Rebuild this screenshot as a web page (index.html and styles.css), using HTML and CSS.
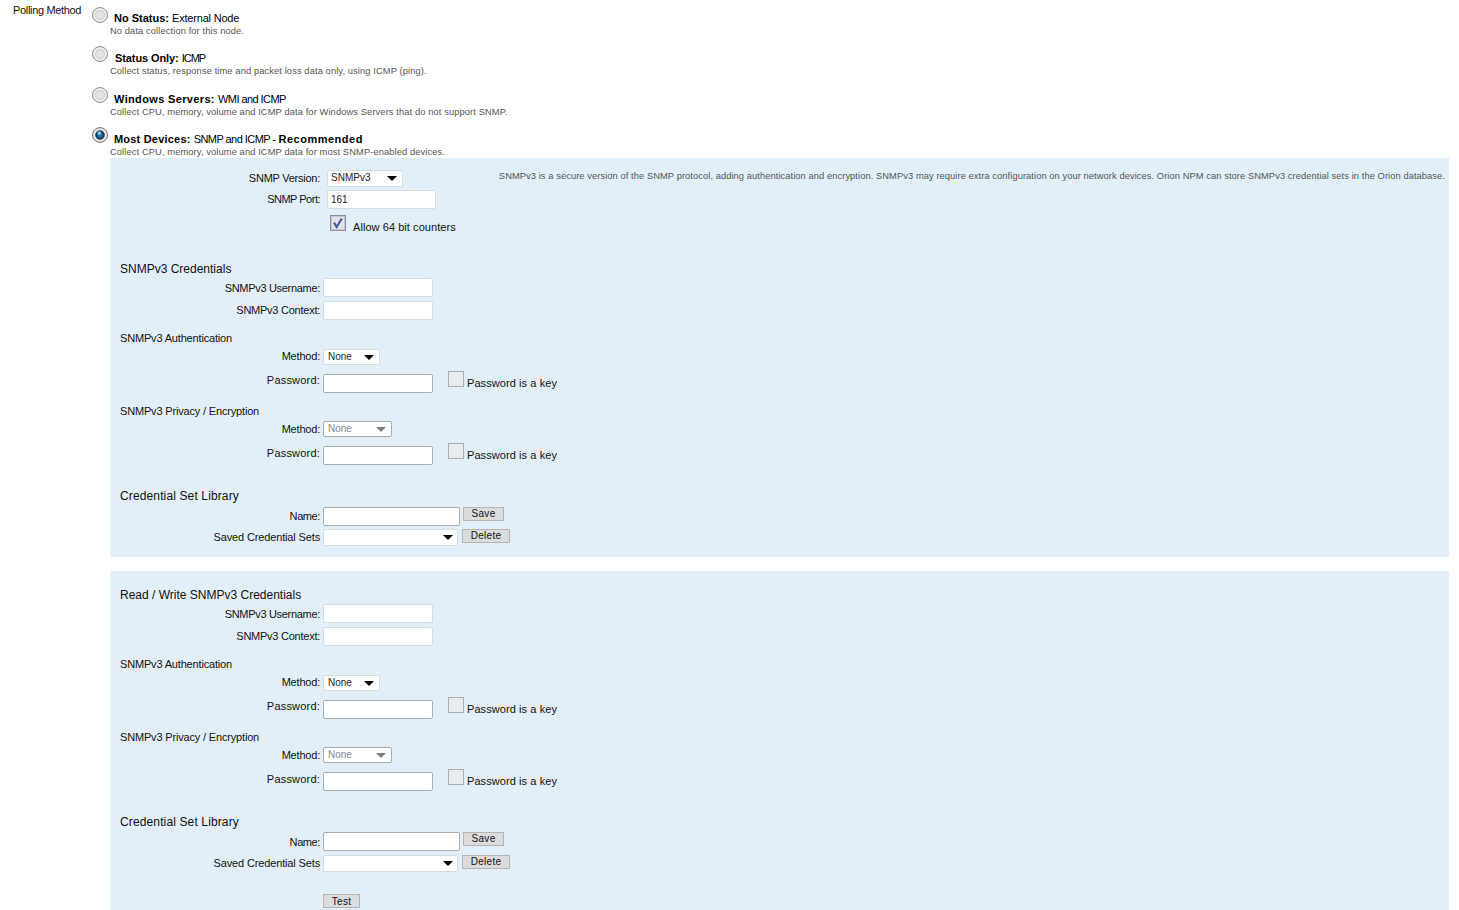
FILE: index.html
```html
<!DOCTYPE html>
<html lang="en">
<head>
<meta charset="utf-8">
<title>Polling Method</title>
<link rel="stylesheet" href="styles.css">
</head>
<body>
<main class="page">
  <div class="page-label">Polling Method</div>
  <div class="methods">
    <div class="option opt-a">
      <div class="option-head"><span class="radio"></span><span class="option-title"><b>No Status:</b> <span class="n-ext">External Node</span></span></div>
      <div class="option-desc">No data collection for this node.</div>
    </div>
    <div class="option opt-b">
      <div class="option-head"><span class="radio"></span><span class="option-title shift"><b class="b-tight">Status Only:</b> <span class="n-icmp">ICMP</span></span></div>
      <div class="option-desc">Collect status, response time and packet loss data only, using ICMP (ping).</div>
    </div>
    <div class="option opt-c">
      <div class="option-head"><span class="radio"></span><span class="option-title"><b class="b-wide">Windows Servers:</b> <span class="n-caps">WMI and ICMP</span></span></div>
      <div class="option-desc">Collect CPU, memory, volume and ICMP data for Windows Servers that do not support SNMP.</div>
    </div>
    <div class="option opt-d">
      <div class="option-head"><span class="radio on"></span><span class="option-title"><b class="b-mid">Most Devices:</b> <span class="n-caps">SNMP and ICMP -</span> <b class="b-rec">Recommended</b></span></div>
      <div class="option-desc">Collect CPU, memory, volume and ICMP data for most SNMP-enabled devices.</div>
    </div>

    <section class="panel panel-first">
      <div class="top">
        <div class="top-form">
          <div class="row r-version"><span class="lbl">SNMP Version:</span><span class="select s-version">SNMPv3</span></div>
          <div class="row r-port"><span class="lbl">SNMP Port:</span><span class="input i-port">161</span></div>
          <div class="row r-allow"><span class="lbl"></span>
            <svg class="tick" width="16" height="16" viewBox="0 0 16 16"><rect x=".5" y=".5" width="15" height="15" fill="#e4e4e8" stroke="#8c8f94"/><rect x="1.5" y="1.5" width="13" height="13" fill="#dfe3ea" stroke="#c4c7cd"/><path d="M4 7.5 L6.6 12 L11.8 3.6" fill="none" stroke="#44579e" stroke-width="2"/></svg>
            <span class="allow-text">Allow 64 bit counters</span>
          </div>
        </div>
        <p class="note">SNMPv3 is a secure version of the SNMP protocol, adding authentication and encryption. SNMPv3 may require extra configuration on your network devices. Orion NPM can store SNMPv3 credential sets in the Orion database.</p>
      </div>

      <div class="cred">
        <h3 class="big-title">SNMPv3 Credentials</h3>
        <div class="row r-user"><span class="lbl">SNMPv3 Username:</span><span class="input i-med"></span></div>
        <div class="row r-ctx"><span class="lbl">SNMPv3 Context:</span><span class="input i-med"></span></div>
        <h4 class="sub-title st-auth">SNMPv3 Authentication</h4>
        <div class="row r-method"><span class="lbl">Method:</span><span class="select s-none">None</span></div>
        <div class="row r-pass1"><span class="lbl">Password:</span><span class="input i-med i-dark"></span><span class="box"></span><span class="key">Password is a key</span></div>
        <h4 class="sub-title st-priv">SNMPv3 Privacy / Encryption</h4>
        <div class="row r-method2"><span class="lbl">Method:</span><span class="select s-off">None</span></div>
        <div class="row r-pass2"><span class="lbl">Password:</span><span class="input i-med i-dark"></span><span class="box"></span><span class="key">Password is a key</span></div>
        <h3 class="big-title st-lib">Credential Set Library</h3>
        <div class="row r-name"><span class="lbl">Name:</span><span class="input i-long i-dark"></span><button class="btn b-save" type="button">Save</button></div>
        <div class="row r-saved"><span class="lbl">Saved Credential Sets</span><span class="select s-saved"></span><button class="btn b-del" type="button">Delete</button></div>
      </div>
    </section>

    <section class="panel panel-second">
      <div class="cred">
        <h3 class="big-title">Read / Write SNMPv3 Credentials</h3>
        <div class="row r-user"><span class="lbl">SNMPv3 Username:</span><span class="input i-med"></span></div>
        <div class="row r-ctx"><span class="lbl">SNMPv3 Context:</span><span class="input i-med"></span></div>
        <h4 class="sub-title st-auth">SNMPv3 Authentication</h4>
        <div class="row r-method"><span class="lbl">Method:</span><span class="select s-none">None</span></div>
        <div class="row r-pass1"><span class="lbl">Password:</span><span class="input i-med i-dark"></span><span class="box"></span><span class="key">Password is a key</span></div>
        <h4 class="sub-title st-priv">SNMPv3 Privacy / Encryption</h4>
        <div class="row r-method2"><span class="lbl">Method:</span><span class="select s-off">None</span></div>
        <div class="row r-pass2"><span class="lbl">Password:</span><span class="input i-med i-dark"></span><span class="box"></span><span class="key">Password is a key</span></div>
        <h3 class="big-title st-lib">Credential Set Library</h3>
        <div class="row r-name"><span class="lbl">Name:</span><span class="input i-long i-dark"></span><button class="btn b-save" type="button">Save</button></div>
        <div class="row r-saved"><span class="lbl">Saved Credential Sets</span><span class="select s-saved"></span><button class="btn b-del" type="button">Delete</button></div>
        <div class="row r-test"><span class="lbl"></span><button class="btn b-test" type="button">Test</button></div>
      </div>
    </section>
  </div>
</main>
</body>
</html>
```
FILE: styles.css
```css
* { box-sizing: border-box; }
html, body { margin: 0; height: 910px; overflow: hidden; background: #fff; }
body { font-family: "Liberation Sans", Arial, sans-serif; font-size: 11px; color: #111; }

.page { display: flex; align-items: flex-start; padding-right: 10px; }
.page-label { flex: none; width: 92px; padding: 3px 0 0 13px; line-height: 14px; font-size: 11px; letter-spacing: -.33px; white-space: nowrap; }
.methods { flex: 1; min-width: 0; padding-top: 7px; }

.option { display: flex; flex-direction: column; }
.opt-a { height: 39px; }
.opt-b { height: 41px; }
.opt-c { height: 40px; }
.opt-d { height: 31px; }
.option-head { display: flex; align-items: flex-start; height: 16px; }
.option-title { margin: 5px 0 0 6px; line-height: 14px; font-size: 11px; color: #000; white-space: nowrap; }
.opt-a .option-title { margin-top: 4px; }
.option-title.shift { margin-left: 7px; }
.n-ext { letter-spacing: -.2px; }
.n-caps { letter-spacing: -.55px; }
.n-icmp { letter-spacing: -1px; }
.b-tight { letter-spacing: -.1px; }
.b-wide { letter-spacing: .35px; }
.b-mid { letter-spacing: .2px; }
.b-rec { letter-spacing: .5px; }
.option-desc { margin: 3px 0 0 18px; line-height: 13px; font-size: 9.33px; letter-spacing: .1px; color: #555; white-space: nowrap; }
.opt-a .option-desc { margin-top: 2px; }

.radio { flex: none; width: 16px; height: 16px; border-radius: 50%; border: 1px solid #8f9296;
  background: radial-gradient(circle closest-side at 50% 50%, #e4e4e4 0 45%, #d0d0d0 68%, #f8f8f8 82%, #dcdcdc 100%); }
.radio.on { border-color: #7c7f83;
  background: radial-gradient(circle 2.5px at 45% 36%, #d6f3fd 0, rgba(214, 243, 253, 0) 100%),
    radial-gradient(circle closest-side at 50% 50%, #1f8fc6 0, #0d5d8f 40%, #10344f 56%, #5b5f64 64%, #f4f4f4 74%, #cfcfcf 100%); }

.panel { background: #e3eff8; margin-left: 18px; }
.panel-first { height: 399px; padding: 12px 4px 0 10px; }
.panel-second { height: 339px; padding: 15px 4px 0 10px; margin-top: 14px; }

.top { display: flex; justify-content: space-between; height: 90px; }
.top-form { width: 340px; flex: none; }
.note { margin: 0; line-height: 12px; font-size: 9.33px; letter-spacing: .07px; color: #555; white-space: nowrap; }

.row { display: flex; align-items: flex-start; }
.lbl { width: 200px; flex: none; text-align: right; font-size: 11px; letter-spacing: -.25px; line-height: 14px; color: #111; white-space: nowrap; }

.input { flex: none; display: block; height: 19px; background: #fff; border: 1px solid #d3dde4; border-radius: 2px;
  font-size: 10px; line-height: 17px; padding-left: 3px; color: #222; margin-left: 3px; }
.i-dark { border-color: #a9adb0; }
.i-med { width: 110px; }
.i-long { width: 137px; }
.i-port { width: 109px; margin-left: 7px; }

.select { flex: none; display: block; position: relative; margin-left: 3px; background: #fff; border: 1px solid #d3dde4; border-radius: 2px;
  font-size: 10px; line-height: 14px; padding-left: 4px; color: #222; }
.select::after { content: ""; position: absolute; top: 5px; right: 5px; border-style: solid; border-width: 5px 5px 0; border-color: #000 transparent transparent; }
.s-version { width: 76px; height: 17px; margin-left: 7px; line-height: 13px; padding-left: 3px; }
.s-none { width: 57px; height: 16px; }
.s-saved { width: 135px; height: 17px; }
.s-saved::after { right: 4px; }
.s-off { width: 69px; height: 16px; color: #7d8a93; border-color: #a9adb0; }
.s-off::after { border-top-color: #7f7f7f; }

.box { flex: none; width: 16px; height: 16px; margin-left: 15px; background: #e7ecef; border: 1px solid #a9adb0; }
.key { margin: 5px 0 0 3px; line-height: 14px; font-size: 11px; letter-spacing: .08px; color: #111; white-space: nowrap; }

.btn { flex: none; margin: 0; padding: 0; height: 14px; background: #dcdcdc; border: 1px solid #b4b4b4; border-radius: 0;
  font-family: inherit; font-size: 10px; line-height: 10px; color: #111; letter-spacing: .3px; }
.b-save { width: 41px; margin-left: 3px; }
.b-del { width: 48px; margin-left: 4px; }
.b-test { width: 37px; margin-left: 3px; padding-top: 1px; }

.big-title, .sub-title { margin: 0; font-weight: 400; white-space: nowrap; color: #111; }
.big-title { height: 18px; font-size: 12px; line-height: 18px; }
.sub-title { height: 14px; font-size: 11px; line-height: 14px; letter-spacing: -.17px; }

.r-version { height: 20px; }
.r-version .lbl { padding-top: 1px; }
.r-port { height: 25px; }
.r-port .lbl { padding-top: 2px; letter-spacing: -.5px; }
.r-allow { height: 20px; }
.r-allow .tick { flex: none; margin-left: 10px; }
.allow-text { margin: 5px 0 0 7px; line-height: 14px; font-size: 11px; letter-spacing: .06px; color: #111; white-space: nowrap; }

.r-user { height: 23px; }
.r-user .lbl { padding-top: 3px; letter-spacing: -.31px; }
.r-ctx .lbl { padding-top: 2px; }
.r-ctx { height: 19px; }
.st-auth { margin-top: 11px; }
.r-method { height: 16px; margin-top: 4px; }
.r-method .lbl { letter-spacing: -.2px; }
.r-method2 .lbl { padding-top: 1px; letter-spacing: -.2px; }
.r-pass1 { height: 22px; margin-top: 6px; }
.r-pass1 .lbl { padding-top: 2px; letter-spacing: .2px; }
.r-pass2 .lbl { padding-top: 3px; letter-spacing: .2px; }
.r-pass1 .input, .r-pass2 .input { margin-top: 3px; }
.st-priv { margin-top: 11px; }
.r-method2 { height: 16px; margin-top: 3px; }
.r-pass2 { height: 22px; margin-top: 6px; }
.st-lib { margin-top: 22px; height: 20px; letter-spacing: .13px; }
.r-name { height: 22px; }
.panel-second .r-name { height: 23px; margin-top: -1px; }
.r-name .lbl { padding-top: 2px; letter-spacing: -.4px; }
.panel-second .r-name .lbl { padding-top: 3px; }
.r-saved { height: 17px; }
.r-saved .lbl { padding-top: 1px; letter-spacing: -.14px; }
.r-test { margin-top: 22px; }
```
